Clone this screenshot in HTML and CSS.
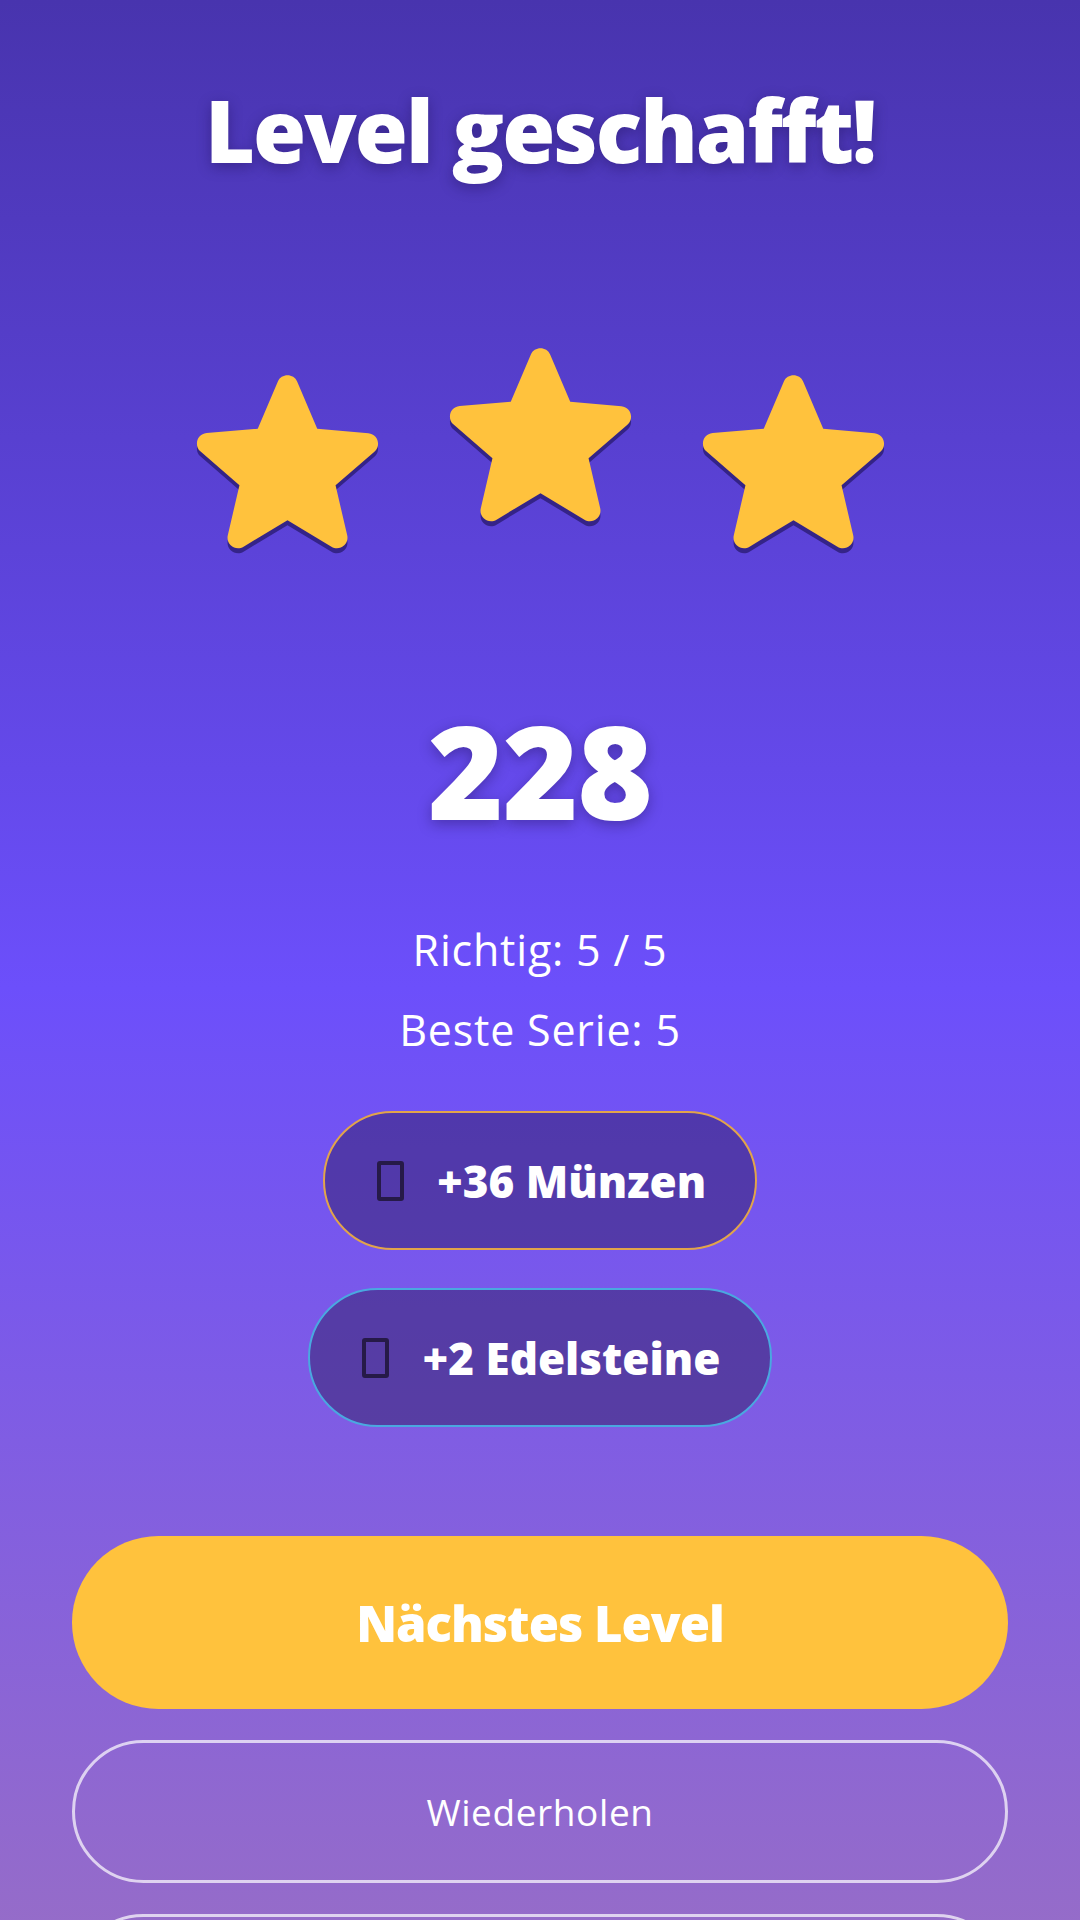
FILE: index.html
```html
<!DOCTYPE html>
<html lang="de">
<head>
  <meta charset="UTF-8">
  <meta name="viewport" content="width=device-width, initial-scale=1.0">
  <title>Level geschafft</title>
  <link rel="stylesheet" href="styles.css">
</head>
<body>
  <div class="ergebnis">
    <h1 class="titel">Level geschafft!</h1>

    <div class="sterne">
      <svg class="stern seite" viewBox="3.45 3.57 17.1 16.5"><path d="M12 17.27l4.15 2.51c.76.46 1.69-.22 1.49-1.08l-1.1-4.72 3.67-3.18c.67-.58.31-1.68-.57-1.75l-4.83-.41-1.89-4.46c-.34-.81-1.5-.81-1.84 0L9.19 8.63l-4.83.41c-.88.07-1.24 1.17-.57 1.75l3.67 3.18-1.1 4.72c-.2.86.73 1.54 1.49 1.08l4.15-2.5z"/></svg>
      <svg class="stern" viewBox="3.45 3.57 17.1 16.5"><path d="M12 17.27l4.15 2.51c.76.46 1.69-.22 1.49-1.08l-1.1-4.72 3.67-3.18c.67-.58.31-1.68-.57-1.75l-4.83-.41-1.89-4.46c-.34-.81-1.5-.81-1.84 0L9.19 8.63l-4.83.41c-.88.07-1.24 1.17-.57 1.75l3.67 3.18-1.1 4.72c-.2.86.73 1.54 1.49 1.08l4.15-2.5z"/></svg>
      <svg class="stern seite" viewBox="3.45 3.57 17.1 16.5"><path d="M12 17.27l4.15 2.51c.76.46 1.69-.22 1.49-1.08l-1.1-4.72 3.67-3.18c.67-.58.31-1.68-.57-1.75l-4.83-.41-1.89-4.46c-.34-.81-1.5-.81-1.84 0L9.19 8.63l-4.83.41c-.88.07-1.24 1.17-.57 1.75l3.67 3.18-1.1 4.72c-.2.86.73 1.54 1.49 1.08l4.15-2.5z"/></svg>
    </div>

    <div class="punkte">228</div>

    <div class="statistik">
      <p>Richtig: 5 / 5</p>
      <p>Beste Serie: 5</p>
    </div>

    <div class="belohnung muenzen"><span class="symbol"></span>+36 Münzen</div>
    <div class="belohnung edelsteine"><span class="symbol"></span>+2 Edelsteine</div>

    <div class="aktionen">
      <button class="knopf weiter">Nächstes Level</button>
      <button class="knopf rand">Wiederholen</button>
      <button class="knopf rand" aria-label="Zur Levelauswahl"></button>
    </div>
  </div>
</body>
</html>
```

FILE: styles.css
```css
body {
  margin: 0;
  padding: 0;
  min-height: 100vh;
  font-family: 'Open Sans', 'Noto Sans', sans-serif;
  color: #ffffff;
  background: linear-gradient(180deg, #4834ae 0%, #6c4ffb 48%, #9b70c2 100%);
  overflow: hidden;
}

.ergebnis {
  display: flex;
  flex-direction: column;
  align-items: center;
  padding: 78px 72px 0;
}

.titel {
  margin: 0;
  font-size: 86px;
  line-height: 1.2;
  font-weight: 800;
  letter-spacing: -2px;
  text-shadow: 0 4px 14px rgba(20, 10, 60, 0.35);
}

.sterne {
  display: flex;
  gap: 72px;
  margin-top: 167px;
}

.stern {
  width: 181px;
  height: 175px;
  fill: #ffc23d;
  overflow: visible;
  filter: drop-shadow(0 5px 0 rgba(40, 25, 110, 0.75));
}

.stern.seite {
  margin-top: 27px;
}

.punkte {
  margin-top: 156px;
  font-size: 129px;
  line-height: 1;
  font-weight: 800;
  letter-spacing: -1px;
  text-shadow: 0 4px 14px rgba(20, 10, 60, 0.35);
}

.statistik {
  margin-top: 75px;
  text-align: center;
}

.statistik p {
  margin: 0;
  font-size: 43px;
  line-height: 80px;
  letter-spacing: 0.8px;
}

.belohnung {
  display: flex;
  align-items: center;
  gap: 33px;
  height: 135px;
  padding: 0 49px 0 52px;
  border-radius: 70px;
  background: rgba(40, 25, 85, 0.45);
  font-size: 44px;
  font-weight: 800;
  letter-spacing: 0;
}

.muenzen {
  margin-top: 41px;
  border: 2px solid #e2a44a;
}

.edelsteine {
  margin-top: 38px;
  border: 2px solid #4aa8e0;
}

.symbol {
  width: 19px;
  height: 32px;
  border: 4px solid #261a48;
  border-radius: 3px;
}

.aktionen {
  align-self: stretch;
  display: flex;
  flex-direction: column;
  gap: 31px;
  margin-top: 109px;
}

.knopf {
  font-family: 'Open Sans', 'Noto Sans', sans-serif;
  color: #ffffff;
  border-radius: 90px;
  cursor: pointer;
}

.weiter {
  height: 173px;
  background-color: #ffc23d;
  border: none;
  font-size: 49px;
  font-weight: 800;
  letter-spacing: -1px;
}

.rand {
  height: 143px;
  background: transparent;
  border: 3px solid rgba(255, 255, 255, 0.7);
  font-size: 37px;
  letter-spacing: 0.6px;
}
```
